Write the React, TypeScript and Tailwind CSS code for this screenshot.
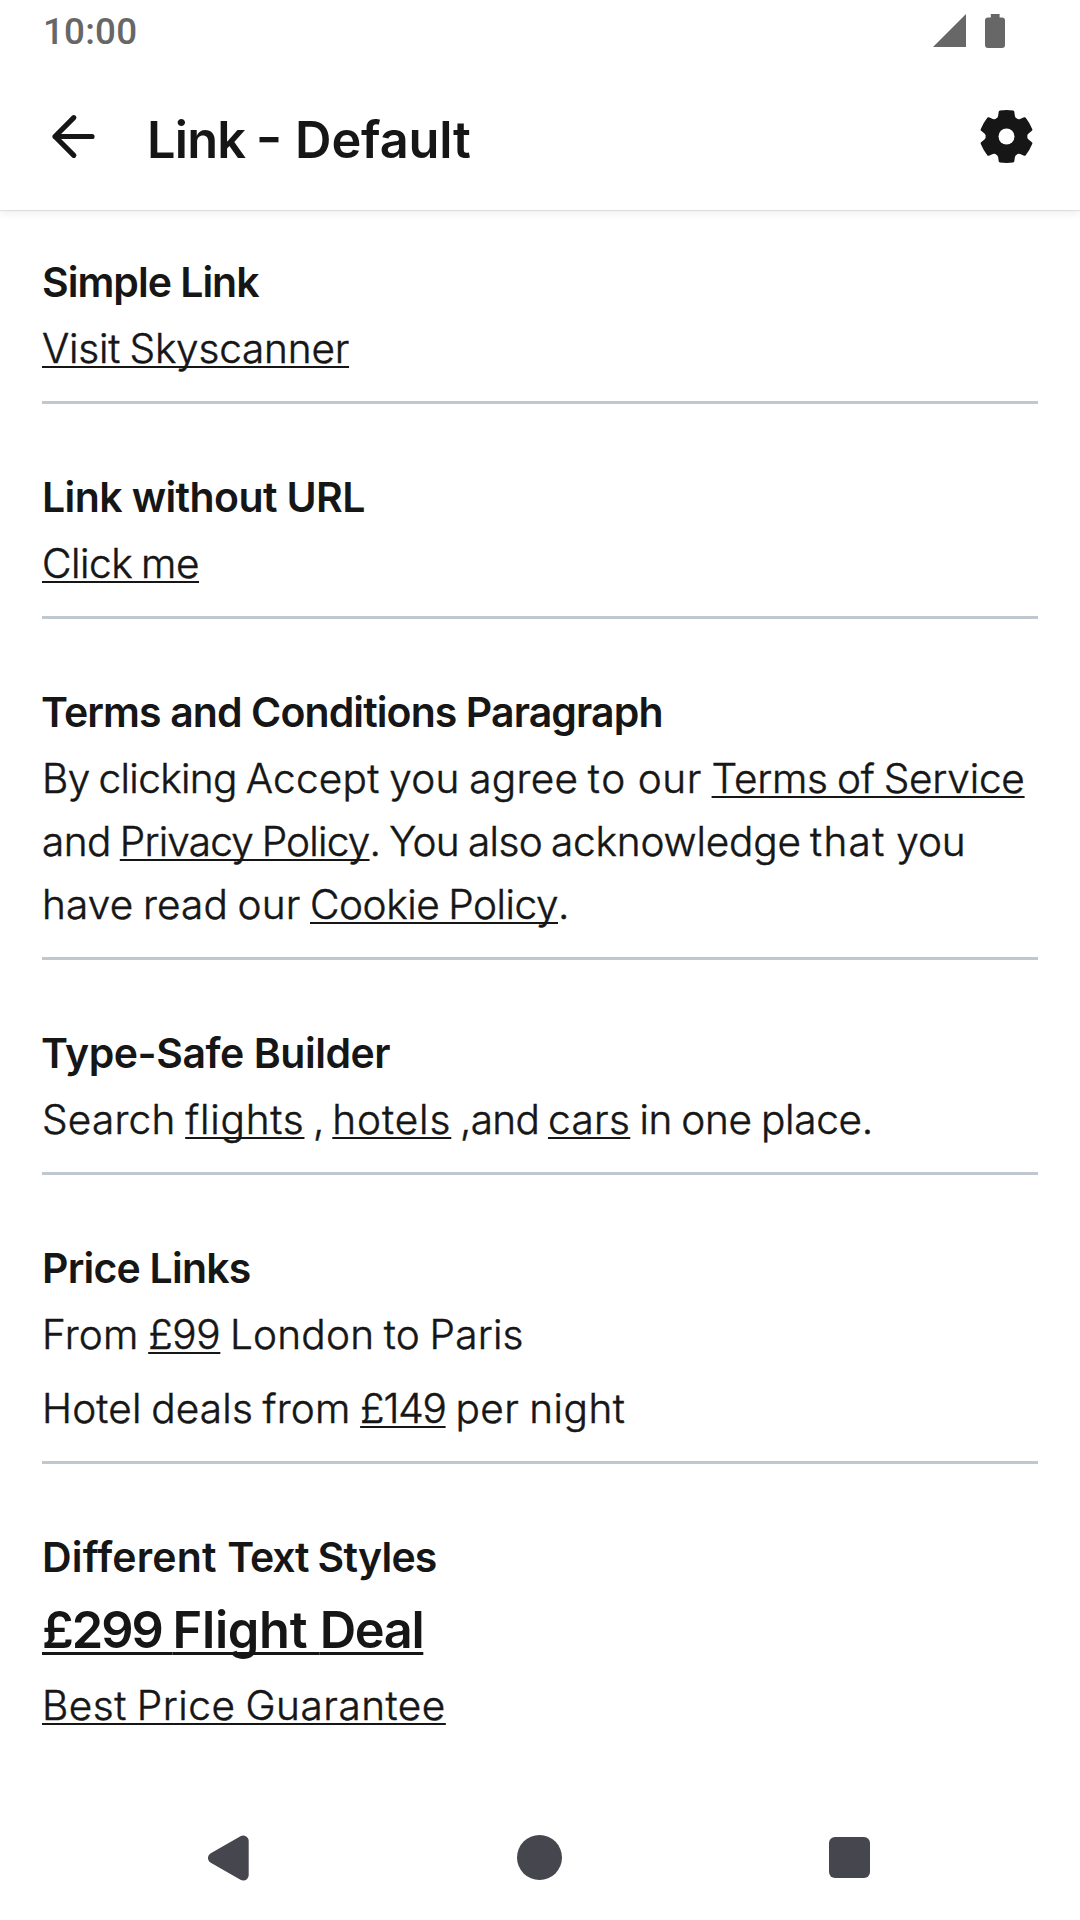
import type { ReactNode } from "react";

const toothPath =
  "M0 0 L-10.7 -17.7 Q-8.8 -18.6 -8.4 -20.6 L-7.8 -24.8 Q-7.6 -25.8 -6.6 -26 Q0 -26.9 6.6 -26 Q7.6 -25.8 7.8 -24.8 L8.4 -20.6 Q8.8 -18.6 10.7 -17.7 Z";

function SignalIcon() {
  return (
    <svg width="33" height="33" viewBox="0 0 33 33" className="mt-[14px] ml-auto block" fill="#676767">
      <path d="M33 0V33H0Z" />
    </svg>
  );
}

function BatteryIcon() {
  return (
    <svg width="20" height="34" viewBox="0 0 20 34" className="mt-[14px] ml-[19px] block" fill="#676767">
      <path d="M5.8 0H14.6V3.4H17Q20 3.4 20 6.4V31Q20 34 17 34H3Q0 34 0 31V6.4Q0 3.4 3 3.4H5.8Z" />
    </svg>
  );
}

function BackIcon() {
  return (
    <svg
      width="63"
      height="63"
      viewBox="0 0 63 63"
      className="block"
      fill="none"
      stroke="#161616"
      strokeWidth="5.2"
      strokeLinecap="round"
      strokeLinejoin="round"
    >
      <path d="M31.8 12.7L13 31.5L31.8 50.3M13 31.5H50" />
    </svg>
  );
}

function GearIcon() {
  return (
    <svg width="63" height="63" viewBox="-31.5 -31.5 63 63" className="ml-auto block" fill="#161616">
      <circle r="19.5" />
      {[0, 60, 120, 180, 240, 300].map((a) => (
        <path key={a} d={toothPath} transform={`rotate(${a})`} />
      ))}
      <circle r="8" fill="#ffffff" />
    </svg>
  );
}

function T({ s, children }: { s: string; children: ReactNode }) {
  return <span className={s}>{children}</span>;
}

function A({ s, children }: { s: string; children: ReactNode }) {
  return (
    <a className={`underline decoration-2 underline-offset-[3px] [text-decoration-skip-ink:none] ${s}`}>{children}</a>
  );
}

function Section({ title, s, last, children }: { title: ReactNode; s: string; last?: boolean; children: ReactNode }) {
  return (
    <section className="mb-[62px]">
      <h2 className={`text-[41px] leading-[63px] font-semibold whitespace-pre ${s}`}>{title}</h2>
      <div className="mt-[3px]">{children}</div>
      {!last && <div className="mt-[21px] h-[3px] bg-[#c1c7cf]" />}
    </section>
  );
}

function Line({ className = "", children }: { className?: string; children: ReactNode }) {
  return (
    <p
      className={`text-[40.5px] leading-[63px] font-light whitespace-pre [-webkit-text-stroke:0.5px_#161616] [word-spacing:-2px] ${className}`}
    >
      {children}
    </p>
  );
}

export default function App() {
  return (
    <div className="flex h-[1920px] w-[1080px] flex-col overflow-hidden bg-white font-[Inter,sans-serif] text-[#161616]">
      <div className="relative z-10 flex h-[63px] shrink-0 items-start bg-white pr-[75px] pl-[43px]">
        <span className="mt-[10px] font-[Roboto,sans-serif] text-[36.75px] leading-[43px] font-medium tracking-[0.2px] text-[#676767]">
          10:00
        </span>
        <SignalIcon />
        <BatteryIcon />
      </div>

      <header className="flex h-[147px] shrink-0 items-center bg-white pr-[42px] pl-[42px] shadow-[0_1px_1px_rgba(0,0,0,0.09),0_4px_8px_rgba(0,0,0,0.06)]">
        <BackIcon />
        <h1 className="mt-[6px] ml-[42px] text-[50.5px] leading-[74px] font-semibold tracking-[-0.15px] whitespace-pre">
          <T s="tracking-[-0.8px]">Link </T>
          <span className="mr-0 ml-[2px] inline-block origin-right -translate-y-[3px] scale-x-[1.15]">-</span> Default
        </h1>
        <GearIcon />
      </header>

      <main className="min-h-0 flex-1 px-[42px] pt-[41px]">
        <Section title="Simple Link" s="tracking-[-1px]">
          <Line>
            <A s="tracking-[-0.18px]">Visit Skyscanner</A>
          </Line>
        </Section>
        <Section title="Link without URL" s="tracking-[-0.6px]">
          <Line>
            <A s="tracking-[-0.45px]">Click me</A>
          </Line>
        </Section>
        <Section title="Terms and Conditions Paragraph" s="-ml-px tracking-[-0.9px]">
          <Line>
            <T s="tracking-[-0.6px]">By clicking </T>
            <T s="tracking-[0.27px]">Accept you agree </T>
            <T s="tracking-[1.6px]">to </T>
            <T s="tracking-[0.5px]">our </T>
            <A s="tracking-[-0.21px]">Terms of Service</A>
          </Line>
          <Line>
            <T s="tracking-[-0.52px]">and </T>
            <A s="tracking-[-0.77px]">Privacy Policy</A>
            <T s="tracking-[-0.6px]">. You also </T>
            <T s="tracking-[-0.15px]">acknowledge </T>
            <T s="tracking-[1.3px]">that </T>
            <T s="tracking-[-0.09px]">you</T>
          </Line>
          <Line>
            <T s="tracking-[0.17px]">have read our </T>
            <A s="tracking-[-0.44px]">Cookie Policy</A>
            <T s="tracking-[-0.4px]">.</T>
          </Line>
        </Section>
        <Section title="Type-Safe Builder" s="-ml-px tracking-[-0.46px]">
          <Line>
            <T s="tracking-[0.24px]">Search </T>
            <A s="tracking-[0.8px]">flights</A>
            <T s="tracking-[-0.8px]"> , </T>
            <A s="tracking-[0.93px]">hotels</A>
            <T s="tracking-[-0.67px]"> ,and </T>
            <A s="tracking-[0.4px]">cars</A>
            <T s="tracking-[-0.27px]"> in one place.</T>
          </Line>
        </Section>
        <Section title="Price Links" s="tracking-[-0.79px]">
          <Line>
            <T s="tracking-[0.22px]">From </T>
            <A s="tracking-[-0.37px]">£99</A>
            <T s="tracking-[0.22px]"> London to Paris</T>
          </Line>
          <Line className="mt-[11px]">
            <T s="tracking-[0.19px]">Hotel deals from </T>
            <A s="tracking-[-1.22px]">£149</A>
            <T s="tracking-[0.5px]"> per night</T>
          </Line>
        </Section>
        <Section
          title={
            <>
              <T s="tracking-[0.2px]">Different </T>
              <T s="tracking-[-1.15px]">Text </T>
              <T s="tracking-[-0.8px]">Styles</T>
            </>
          }
          s=""
          last
        >
          <p className="mt-[4px] text-[50.5px] leading-[74px] font-semibold whitespace-pre">
            <a className="underline decoration-[3px] underline-offset-4 [text-decoration-skip-ink:none]">
              <T s="tracking-[-2px]">£299 </T>
              <T s="tracking-[-0.3px]">Flight </T>
              <T s="tracking-[-1.35px]">Deal</T>
            </a>
          </p>
          <Line className="mt-[7px]">
            <A s="tracking-[0.54px]">Best Price Guarantee</A>
          </Line>
        </Section>
      </main>

      <nav className="flex h-[126px] shrink-0 items-center justify-between bg-white pt-px pr-[210px] pl-[208px]">
        <svg width="41" height="46" viewBox="0 0 41 46" className="block">
          <path
            d="M5.5 23L35.2 6V40Z"
            fill="#46464f"
            stroke="#46464f"
            strokeWidth="11"
            strokeLinejoin="round"
          />
        </svg>
        <div className="ml-[1px] size-[45px] rounded-full bg-[#46464f]" />
        <div className="size-[41px] rounded-[6px] bg-[#46464f]" />
      </nav>
    </div>
  );
}
